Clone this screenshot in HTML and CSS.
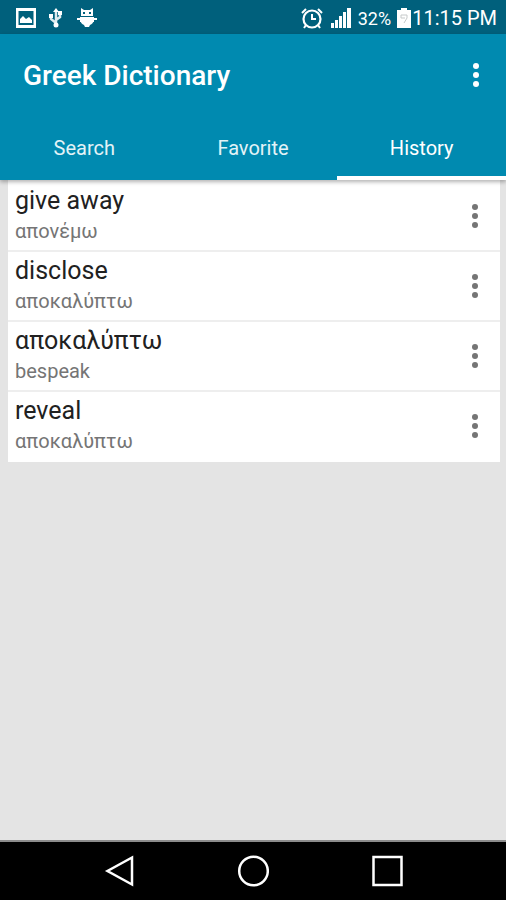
FILE: index.html
```html
<!DOCTYPE html>
<html lang="en">
<head>
  <meta charset="UTF-8">
  <meta name="viewport" content="width=device-width, initial-scale=1.0">
  <title>Greek Dictionary</title>
  <link rel="stylesheet" href="styles.css">
</head>
<body>

<!-- Status bar -->
<div class="status-bar">
  <div class="status-left">
    <svg width="20" height="20" viewBox="0 0 20 20">
      <path fill="#fff" fill-rule="evenodd" d="M0 0H20V20H0ZM2.500 3V17H17.500V3Z"/>
      <path fill="#fff" d="M4 15V11L7 8L10 11L13 9L16 12V15Z"/>
    </svg>
    <svg width="14" height="20" viewBox="0 0 14 20">
      <path fill="none" stroke="#dfecef" stroke-width="2.500" d="M7 3V18M2 9V11L7 15M11 6V9L7 12"/>
      <path fill="#fff" d="M4 4L7 0L10 4ZM0 6H4V10H0ZM9 3H13V7H9Z"/>
      <circle cx="7" cy="17" r="2.500" fill="#fff"/>
    </svg>
    <svg width="22" height="20" viewBox="0 0 22 20">
      <path fill="#fff" d="M5 0L8 2H14L17 0V8H5ZM1 10H21V12H18Q17 16 14 17L13 19H9L8 17Q5 16 4 12H1ZM4 9H18V14H4Z"/>
      <path stroke="#00607c" d="M4 8.500H18"/>
      <path fill="#00607c" d="M7 4H9V6H7ZM13 4H15V6H13Z"/>
    </svg>
  </div>
  <div class="status-right">
    <svg width="24" height="22" viewBox="0 0 24 22">
      <circle cx="12" cy="12" r="8.500" fill="none" stroke="#fff" stroke-width="2.200"/>
      <path fill="none" stroke="#fff" stroke-width="2" d="M12 7V12H16M2 6L6 2M18 2L22 6M6 18L4 21M18 18L20 21"/>
    </svg>
    <svg width="22" height="20" viewBox="0 0 22 20">
      <path fill="#fff" d="M1 15H4V20H1ZM5 12H8V20H5ZM9 8H12V20H9ZM13 4H16V20H13ZM17 0H21V20H17Z"/>
    </svg>
    <span class="percent">32%</span>
    <svg width="14" height="20" viewBox="0 0 14 20">
      <path fill="#fff" d="M4 0H10V2H14V20H0V2H4Z"/>
      <path fill="none" stroke="#c5c9ca" d="M4 7H10V10L7 15M4 7V10H8"/>
    </svg>
    <span class="clock">11:15 PM</span>
  </div>
</div>

<!-- App bar -->
<header class="app-bar">
  <div class="toolbar">
    <h1>Greek Dictionary</h1>
    <button class="more" aria-label="More options"><i></i><i></i><i></i></button>
  </div>
  <nav class="tabs">
    <a href="#search">Search</a>
    <a href="#favorite">Favorite</a>
    <a href="#history" class="active">History</a>
  </nav>
</header>

<!-- History list -->
<main>
  <ul class="word-list">
    <li>
      <div class="entry">
        <div class="word">give away</div>
        <div class="meaning">απονέμω</div>
      </div>
      <button class="more" aria-label="Options for give away"><i></i><i></i><i></i></button>
    </li>
    <li>
      <div class="entry">
        <div class="word">disclose</div>
        <div class="meaning">αποκαλύπτω</div>
      </div>
      <button class="more" aria-label="Options for disclose"><i></i><i></i><i></i></button>
    </li>
    <li>
      <div class="entry">
        <div class="word">αποκαλύπτω</div>
        <div class="meaning">bespeak</div>
      </div>
      <button class="more" aria-label="Options for αποκαλύπτω"><i></i><i></i><i></i></button>
    </li>
    <li>
      <div class="entry">
        <div class="word">reveal</div>
        <div class="meaning">αποκαλύπτω</div>
      </div>
      <button class="more" aria-label="Options for reveal"><i></i><i></i><i></i></button>
    </li>
  </ul>
</main>

<!-- System navigation -->
<footer class="nav-bar">
  <button aria-label="Back">
    <svg width="32" height="32" viewBox="0 0 32 32"><path d="M29 2.500V29.500L4.500 16Z"/></svg>
  </button>
  <button aria-label="Home">
    <svg width="32" height="32" viewBox="0 0 32 32"><circle cx="16.500" cy="16" r="14.300"/></svg>
  </button>
  <button aria-label="Recent apps">
    <svg width="32" height="32" viewBox="0 0 32 32"><path d="M2.500 2H30.500V30H2.500Z"/></svg>
  </button>
</footer>

</body>
</html>
```

FILE: styles.css
```css
* {
  box-sizing: border-box;
}

body {
  margin: 0;
  min-height: 100vh;
  display: flex;
  flex-direction: column;
  background: #e4e4e4;
  font-family: Roboto, "Noto Sans", sans-serif;
}

button {
  border: none;
  background: none;
  padding: 0;
  cursor: pointer;
}

svg {
  display: block;
}

.status-bar {
  height: 34px;
  padding: 2px 9px 0 16px;
  display: flex;
  align-items: center;
  justify-content: space-between;
  background: #00607c;
  color: #fff;
}

.status-left {
  display: flex;
  gap: 13px;
}

.status-right {
  display: flex;
  align-items: center;
  gap: 6px;
}

.percent {
  font-size: 18px;
}

.clock {
  font-size: 20px;
  margin-left: -5px;
}

.app-bar {
  background: #008ab0;
  color: #fff;
  box-shadow: 0 2px 4px rgba(0,0,0,0.3);
  z-index: 1;
}

.toolbar {
  height: 82px;
  padding: 0 16px 0 23px;
  display: flex;
  align-items: center;
  justify-content: space-between;
}

.toolbar h1 {
  margin: 0;
  font-size: 28px;
  font-weight: 500;
}

.more {
  width: 28px;
  height: 40px;
  display: flex;
  flex-direction: column;
  align-items: center;
  justify-content: center;
  gap: 3px;
  color: #757575;
}

.more i {
  width: 6px;
  height: 6px;
  border-radius: 50%;
  background: currentColor;
}

.toolbar .more {
  color: #fff;
}

.tabs {
  display: flex;
}

.tabs a {
  flex: 1;
  height: 64px;
  border-bottom: 4px solid transparent;
  color: #e3f3f7;
  font-size: 20px;
  line-height: 64px;
  text-align: center;
  text-decoration: none;
}

.tabs a.active {
  border-bottom-color: #fff;
  color: #fff;
}

main {
  flex: 1;
  padding: 0 6px 0 8px;
}

.word-list {
  margin: 0;
  padding: 2px 0 0;
  list-style: none;
  background: #fff;
}

.word-list li {
  height: 70px;
  padding: 0 11px 0 7px;
  display: flex;
  align-items: center;
  justify-content: space-between;
  border-bottom: 2px solid #eee;
}

.word-list li:last-child {
  border-bottom-color: #fff;
}

.word {
  color: #212121;
  font-size: 25px;
  line-height: 32px;
}

.meaning {
  color: #757575;
  font-size: 20px;
  line-height: 28px;
}

.entry {
  padding-bottom: 2px;
}

.nav-bar {
  height: 60px;
  display: flex;
  align-items: center;
  justify-content: center;
  background: #000;
  border-top: 2px solid #8c8c8c;
}

.nav-bar button {
  width: 134px;
  display: flex;
  justify-content: center;
}

.nav-bar svg {
  fill: none;
  stroke: #fff;
  stroke-width: 2.5;
}
```
